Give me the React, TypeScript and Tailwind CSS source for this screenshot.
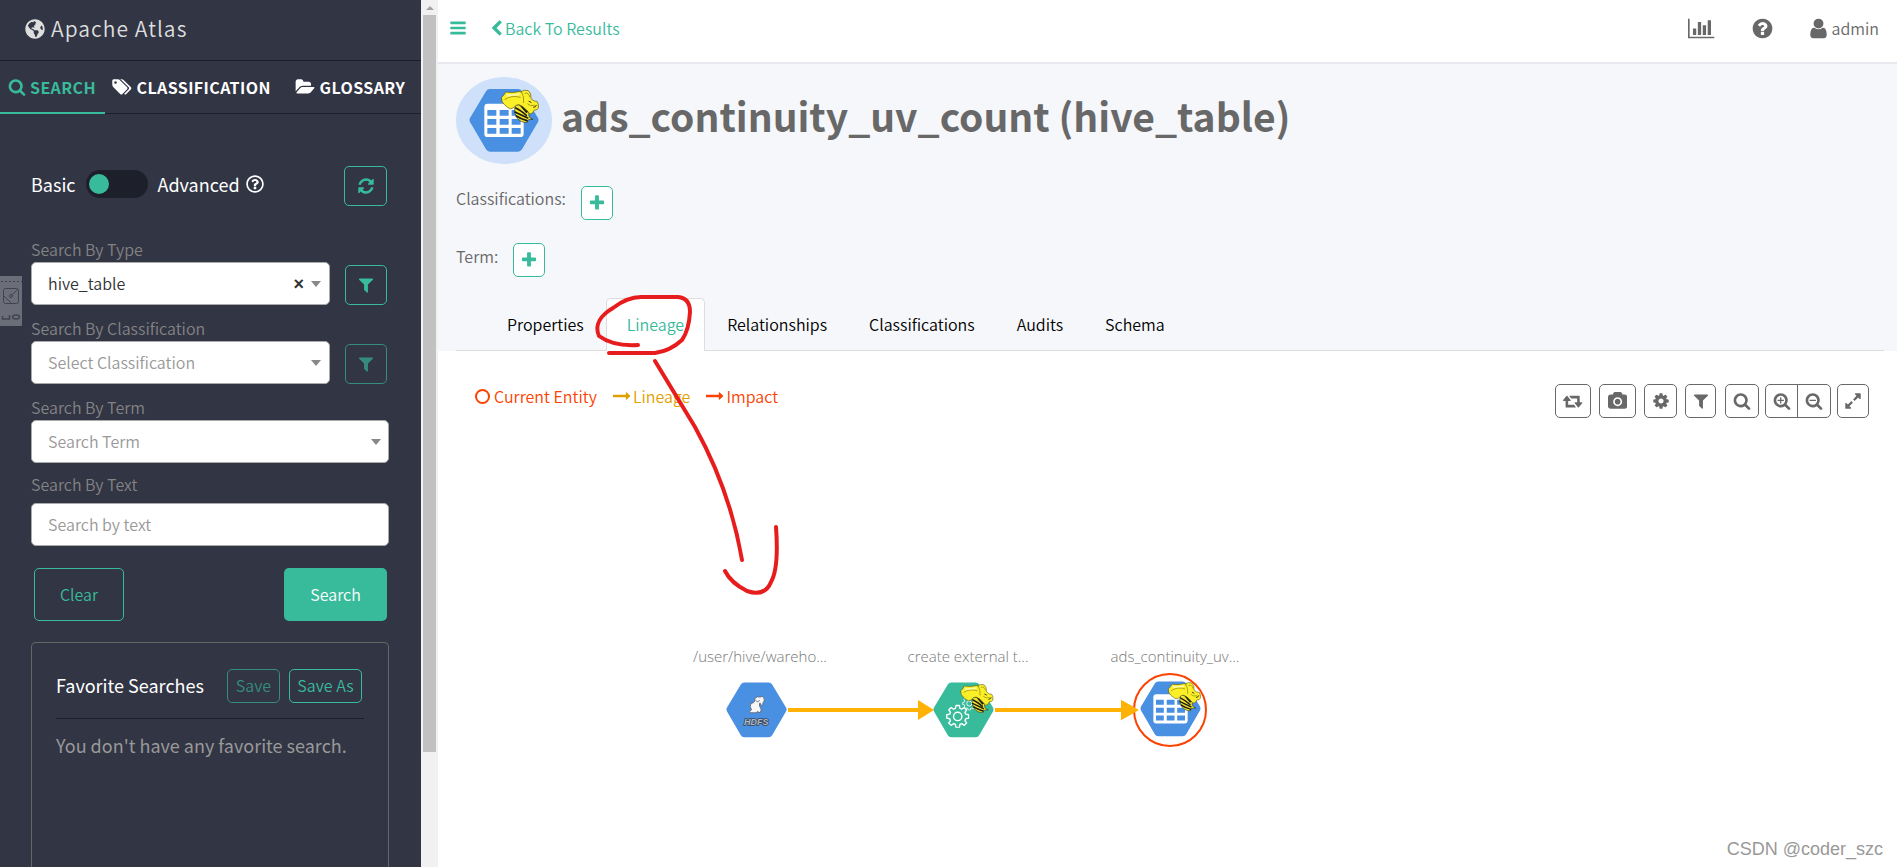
import { FaGlobeAmericas, FaRegQuestionCircle } from "react-icons/fa";

const icons = {
  search: {
    width: 1792,
    d: "M1216 832q0-185-131.5-316.5t-316.5-131.5-316.5 131.5-131.5 316.5 131.5 316.5 316.5 131.5 316.5-131.5 131.5-316.5zm512 832q0 52-38 90t-90 38q-54 0-90-38l-343-342q-179 124-399 124-143 0-273.5-55.5t-225-150-150-225-55.5-273.5 55.5-273.5 150-225 225-150 273.5-55.5 273.5 55.5 225 150 150 225 55.5 273.5q0 220-124 399l343 343q37 37 37 90z",
  },
  zoomIn: {
    width: 1792,
    d: "M1088 800v64q0 13-9.5 22.5t-22.5 9.5h-224v224q0 13-9.5 22.5t-22.5 9.5h-64q-13 0-22.5-9.5t-9.5-22.5v-224h-224q-13 0-22.5-9.5t-9.5-22.5v-64q0-13 9.5-22.5t22.5-9.5h224v-224q0-13 9.5-22.5t22.5-9.5h64q13 0 22.5 9.5t9.5 22.5v224h224q13 0 22.5 9.5t9.5 22.5zm128 32q0-185-131.5-316.5t-316.5-131.5-316.5 131.5-131.5 316.5 131.5 316.5 316.5 131.5 316.5-131.5 131.5-316.5zm512 832q0 53-37.5 90.5t-90.5 37.5q-54 0-90-38l-343-342q-179 124-399 124-143 0-273.5-55.5t-225-150-150-225-55.5-273.5 55.5-273.5 150-225 225-150 273.5-55.5 273.5 55.5 225 150 150 225 55.5 273.5q0 220-124 399l343 343q37 37 37 90z",
  },
  zoomOut: {
    width: 1792,
    d: "M1088 800v64q0 13-9.5 22.5t-22.5 9.5h-576q-13 0-22.5-9.5t-9.5-22.5v-64q0-13 9.5-22.5t22.5-9.5h576q13 0 22.5 9.5t9.5 22.5zm128 32q0-185-131.5-316.5t-316.5-131.5-316.5 131.5-131.5 316.5 131.5 316.5 316.5 131.5 316.5-131.5 131.5-316.5zm512 832q0 53-37.5 90.5t-90.5 37.5q-54 0-90-38l-343-342q-179 124-399 124-143 0-273.5-55.5t-225-150-150-225-55.5-273.5 55.5-273.5 150-225 225-150 273.5-55.5 273.5 55.5 225 150 150 225 55.5 273.5q0 220-124 399l343 343q37 37 37 90z",
  },
  refresh: {
    width: 1792,
    d: "M1639 1056q0 5-1 7-64 268-268 434.5t-478 166.5q-146 0-282.5-55t-243.5-157l-129 129q-19 19-45 19t-45-19-19-45v-448q0-26 19-45t45-19h448q26 0 45 19t19 45-19 45l-137 137q71 66 161 102t187 36q134 0 250-65t186-179q11-17 53-117 8-23 30-23h192q13 0 22.5 9.5t9.5 22.5zm25-800v448q0 26-19 45t-45 19h-448q-26 0-45-19t-19-45 19-45l138-138q-148-137-349-137-134 0-250 65t-186 179q-11 17-53 117-8 23-30 23h-199q-13 0-22.5-9.5t-9.5-22.5v-7q65-268 270-434.5t480-166.5q146 0 284 55.5t245 156.5l130-129q19-19 45-19t45 19 19 45z",
  },
  filter: {
    width: 1792,
    d: "M1595 295q17 41-14 70l-493 493v742q0 42-39 59-13 5-25 5-27 0-45-19l-256-256q-19-19-19-45v-486l-493-493q-31-29-14-70 17-39 59-39h1280q42 0 59 39z",
  },
  plus: {
    width: 1792,
    d: "M1600 736v192q0 40-28 68t-68 28h-416v416q0 40-28 68t-68 28h-192q-40 0-68-28t-28-68v-416h-416q-40 0-68-28t-28-68v-192q0-40 28-68t68-28h416v-416q0-40 28-68t68-28h192q40 0 68 28t28 68v416h416q40 0 68 28t28 68z",
  },
  bars: {
    width: 1792,
    d: "M1664 1344v128q0 26-19 45t-45 19h-1408q-26 0-45-19t-19-45v-128q0-26 19-45t45-19h1408q26 0 45 19t19 45zm0-512v128q0 26-19 45t-45 19h-1408q-26 0-45-19t-19-45v-128q0-26 19-45t45-19h1408q26 0 45 19t19 45zm0-512v128q0 26-19 45t-45 19h-1408q-26 0-45-19t-19-45v-128q0-26 19-45t45-19h1408q26 0 45 19t19 45z",
  },
  barChart: {
    width: 2048,
    d: "M640 896v512h-256v-512h256zm384-512v1024h-256v-1024h256zm1024 1152v128h-2048v-1536h128v1408h1920zm-640-896v768h-256v-768h256zm384-384v1152h-256v-1152h256z",
  },
  question: {
    width: 1792,
    d: "M1024 1376v-192q0-14-9-23t-23-9h-192q-14 0-23 9t-9 23v192q0 14 9 23t23 9h192q14 0 23-9t9-23zm256-672q0-88-55.5-163t-138.5-116-170-41q-243 0-371 213-15 24 8 42l132 100q7 6 19 6 16 0 25-12 53-68 86-92 34-24 86-24 48 0 85.5 26t37.5 59q0 38-20 61t-68 45q-63 28-115.5 86.5t-52.5 125.5v36q0 14 9 23t23 9h192q14 0 23-9t9-23q0-19 21.5-49.5t54.5-49.5q32-18 49-28.5t46-35 44.5-48 28-60.5 12.5-81zm384 192q0 209-103 385.5t-279.5 279.5-385.5 103-385.5-103-279.5-279.5-103-385.5 103-385.5 279.5-279.5 385.5-103 385.5 103 279.5 279.5 103 385.5z",
  },
  user: {
    width: 1792,
    d: "M1536 1399q0 109-62.5 187t-150.5 78h-854q-88 0-150.5-78t-62.5-187q0-85 8.5-160.5t31.5-152 58.5-131 94-89 134.5-34.5q131 128 313 128t313-128q76 0 134.5 34.5t94 89 58.5 131 31.5 152 8.5 160.5zm-256-887q0 159-112.5 271.5t-271.5 112.5-271.5-112.5-112.5-271.5 112.5-271.5 271.5-112.5 271.5 112.5 112.5 271.5z",
  },
  chevronLeft: {
    width: 1792,
    d: "M1427 301l-531 531 531 531q19 19 19 45t-19 45l-166 166q-19 19-45 19t-45-19l-742-742q-19-19-19-45t19-45l742-742q19-19 45-19t45 19l166 166q19 19 19 45t-19 45z",
  },
  folderOpen: {
    width: 2048,
    d: "M1943 952q0 31-31 66l-336 396q-43 51-120.5 86.5t-143.5 35.5h-1088q-34 0-60.5-13t-26.5-43q0-31 31-66l336-396q43-51 120.5-86.5t143.5-35.5h1088q34 0 60.5 13t26.5 43zm-343-344v160h-832q-94 0-197 47.5t-164 119.5l-337 396-5 6q0-4-.5-12.5t-.5-12.5v-960q0-92 66-158t158-66h320q92 0 158 66t66 158v32h544q92 0 158 66t66 158z",
  },
  tags: {
    width: 2048,
    d: "M576 448q0-53-37.5-90.5t-90.5-37.5-90.5 37.5-37.5 90.5 37.5 90.5 90.5 37.5 90.5-37.5 37.5-90.5zm1067 576q0 53-37 90l-491 492q-39 37-91 37-53 0-90-37l-715-716q-38-37-64.5-101t-26.5-117v-416q0-52 38-90t90-38h416q53 0 117 26.5t102 64.5l715 714q37 39 37 91zm384 0q0 53-37 90l-491 492q-39 37-91 37-36 0-59-14t-53-45l470-470q37-37 37-90 0-52-37-91l-715-714q-38-38-102-64.5t-117-26.5h224q53 0 117 26.5t102 64.5l715 714q37 39 37 91z",
  },
  retweet: {
    width: 1920,
    d: "M1280 1504q0 13-9.5 22.5t-22.5 9.5h-960q-8 0-13.5-2t-9-7-5.5-8-3-11.5-1-11.5v-600h-192q-26 0-45-19t-19-45q0-24 15-41l320-384q19-22 49-22t49 22l320 384q15 17 15 41 0 26-19 45t-45 19h-192v384h576q16 0 25 11l160 192q7 10 7 21zm640-416q0 24-15 41l-320 384q-20 23-49 23t-49-23l-320-384q-15-17-15-41 0-26 19-45t45-19h192v-384h-576q-16 0-25-12l-160-192q-7-9-7-20 0-13 9.5-22.5t22.5-9.5h960q8 0 13.5 2t9 7 5.5 8 3 11.5 1 11.5v600h192q26 0 45 19t19 45z",
  },
  camera: {
    width: 1920,
    d: "M960 672q119 0 203.5 84.5t84.5 203.5-84.5 203.5-203.5 84.5-203.5-84.5-84.5-203.5 84.5-203.5 203.5-84.5zm704-416q106 0 181 75t75 181v896q0 106-75 181t-181 75h-1408q-106 0-181-75t-75-181v-896q0-106 75-181t181-75h224l51-136q19-49 69.5-84.5t103.5-35.5h512q53 0 103.5 35.5t69.5 84.5l51 136h224zm-704 1152q185 0 316.5-131.5t131.5-316.5-131.5-316.5-316.5-131.5-316.5 131.5-131.5 316.5 131.5 316.5 316.5 131.5z",
  },
  cog: {
    width: 1792,
    d: "M1152 896q0-106-75-181t-181-75-181 75-75 181 75 181 181 75 181-75 75-181zm512-109v222q0 12-8 23t-20 13l-185 28q-19 54-39 91 35 50 107 138 10 12 10 25t-9 23q-27 37-99 108t-94 71q-12 0-26-9l-138-108q-44 23-91 38-16 136-29 186-7 28-36 28h-222q-14 0-24.5-8.5t-11.5-21.5l-28-184q-49-16-90-37l-141 107q-10 9-25 9-14 0-25-11-126-114-165-168-7-10-7-23 0-12 8-23 15-21 51-66.5t54-70.5q-27-50-41-99l-183-27q-13-2-21-12.5t-8-23.5v-222q0-12 8-23t19-13l186-28q14-46 39-92-40-57-107-138-10-12-10-24 0-10 9-23 26-36 98.5-107.5t94.5-71.5q13 0 26 10l138 107q44-23 91-38 16-136 29-186 7-28 36-28h222q14 0 24.5 8.5t11.5 21.5l28 184q49 16 90 37l142-107q9-9 24-9 13 0 25 10 129 119 165 170 7 8 7 22 0 12-8 23-15 21-51 66.5t-54 70.5q26 50 41 98l183 28q13 2 21 12.5t8 23.5z",
  },
  expand: {
    width: 1792,
    d: "M883 1056q0 13-10 23l-332 332 144 144q19 19 19 45t-19 45-45 19h-448q-26 0-45-19t-19-45v-448q0-26 19-45t45-19 45 19l144 144 332-332q10-10 23-10t23 10l114 114q10 10 10 23zm781-864v448q0 26-19 45t-45 19-45-19l-144-144-332 332q-10 10-23 10t-23-10l-114-114q-10-10-10-23t10-23l332-332-144-144q-19-19-19-45t19-45 45-19h448q26 0 45 19t19 45z",
  },
  longArrow: {
    width: 1792,
    d: "M1728 893q0 14-10 24l-384 354q-16 14-35 6-19-9-19-29v-224h-1248q-14 0-23-9t-9-23v-192q0-14 9-23t23-9h1248v-224q0-21 19-29t35 5l384 350q10 10 10 23z",
  },
};

type IconName = keyof typeof icons;

function Icon({ name, size = 18 }: { name: IconName; size?: number }) {
  const { width, d } = icons[name];
  return (
    <svg
      className="shrink-0"
      height={size}
      width={(size * width) / 1792}
      viewBox={`0 0 ${width} 1792`}
      fill="currentColor"
      aria-hidden="true"
    >
      <path d={d} />
    </svg>
  );
}

// Yellow elephant head on a striped bee body, drawn on a 114x102 grid
function HiveMark() {
  return (
    <g strokeLinejoin="round" strokeLinecap="round">
      <path
        d="M44 48C38 58 42 72 46 82C54 96 70 102 80 98C74 94 82 90 96 90C86 88 82 80 84 70L70 48Z"
        fill="#f4e62a"
        stroke="#2b2a1c"
        strokeWidth="2"
      />
      <path d="M44 56Q58 62 76 78M42 68Q58 76 80 86M46 80Q58 88 78 94" fill="none" stroke="#1f1e14" strokeWidth="5" />
      <path d="M52 44L76 72L84 66L64 42Z" fill="#1f1e14" />
      <path
        d="M2 24Q10 18 14 8Q34 12 58 6Q62 14 62 6Q70 0 82 4Q92 12 90 28Q100 38 108 36Q114 44 112 56Q108 64 100 62Q96 74 86 74Q82 66 74 60Q66 50 54 46Q48 44 36 56Q28 62 20 54Q8 46 4 38Z"
        fill="#fbf028"
        stroke="#5d5613"
        strokeWidth="2"
      />
      <path d="M62 8Q70 22 68 40M72 12Q84 8 86 22M80 44Q88 52 100 48M12 30Q32 16 58 24" fill="none" stroke="#a79c19" strokeWidth="3" />
      <path d="M84 36l6 3M98 54q6 0 8-6" fill="none" stroke="#2b2a1c" strokeWidth="3" />
      <path d="M18 14Q36 16 54 12L56 18Q34 20 16 22Z" fill="#fdf9a5" />
    </g>
  );
}

const HEXAGON =
  "M3 87Q0 93 3 99L51 181Q55 188 63 188H147Q155 188 159 181L207 99Q210 93 207 87L159 7Q155 0 147 0H63Q55 0 51 7Z";

// Hive table symbol on a 210x189 grid
function TableMark() {
  return (
    <g>
      <path d={HEXAGON} fill="#4a90e2" />
      <rect x="46" y="44" width="118" height="100" rx="10" fill="#fff" />
      <g fill="#4a90e2">
        <path d="M55 63h27v17H55zM92 63h27v17H92zM128 63h27v17h-27zM55 90h27v17H55zM92 90h27v17H92zM128 90h27v17h-27zM55 117h27v17H55zM92 117h27v17H92zM128 117h27v17h-27z" />
      </g>
      <g transform="translate(96 1)">
        <HiveMark />
      </g>
    </g>
  );
}

function GearMark({ x, y, size }: { x: number; y: number; size: number }) {
  return (
    <svg x={x} y={y} width={size} height={size} viewBox="0 0 24 24" fill="none" stroke="#fff" strokeWidth="1.4">
      <path
        d="M10.3 1.5h3.4l.6 2.9 1.8.8 2.5-1.7 2.4 2.4-1.7 2.5.8 1.8 2.9.6v3.4l-2.9.6-.8 1.8 1.7 2.5-2.4 2.4-2.5-1.7-1.8.8-.6 2.9h-3.4l-.6-2.9-1.8-.8-2.5 1.7L3 19.1l1.7-2.5-.8-1.8-2.9-.6v-3.4l2.9-.6.8-1.8L3 5.9l2.4-2.4 2.5 1.7 1.8-.8z"
        strokeLinejoin="round"
      />
      <circle cx="12" cy="12.5" r="4.2" />
    </svg>
  );
}

function LineageGraph() {
  return (
    <svg width="640" height="120" viewBox="0 0 640 120" className="block" role="img" aria-label="Lineage graph">
      <g fill="#777" fontFamily="'Open Sans', 'Noto Sans', sans-serif" fontWeight="300" fontSize="15" textAnchor="middle">
        <text x="82" y="23">/user/hive/wareho...</text>
        <text x="290" y="23">create external t...</text>
        <text x="497" y="23">ads_continuity_uv...</text>
      </g>
      <path d="M110 69h130v-8l16 10-16 10v-8H110zM317 69h126v-8l18 10-18 10v-8H317z" fill="#ffb203" />
      <svg x="48" y="43" width="61" height="56" viewBox="0 0 210 189">
        <path d={HEXAGON} fill="#4a90e2" />
        <g stroke="#5b6472" strokeWidth="3" fill="#f7f7f7" strokeLinejoin="round">
          <path d="M100 54Q108 46 116 50Q126 44 131 54Q134 64 127 70Q130 80 121 78Q118 74 117 70Q112 76 118 86Q124 92 118 104L108 100Q104 106 98 104H82Q78 98 88 94Q80 84 86 72Q96 70 98 66Z" />
          <path d="M102 62Q108 70 116 62" fill="none" />
        </g>
        <text
          x="104"
          y="146"
          textAnchor="middle"
          fontFamily="'Liberation Sans', sans-serif"
          fontWeight="700"
          fontStyle="italic"
          fontSize="31"
          fill="#a9b8cc"
          stroke="#3f4652"
          strokeWidth="5"
          paintOrder="stroke"
        >
          HDFS
        </text>
      </svg>
      <svg x="255" y="43" width="61" height="56" viewBox="0 0 210 189">
        <path d={HEXAGON} fill="#38bb9b" />
        <GearMark x={44} y={74} size={82} />
        <GearMark x={100} y={46} size={50} />
        <g transform="translate(94 4)">
          <HiveMark />
        </g>
      </svg>
      <circle cx="492" cy="71" r="36" fill="#fff" stroke="#fb4200" strokeWidth="2" />
      <svg x="462" y="42" width="61" height="56" viewBox="0 0 210 189">
        <TableMark />
      </svg>
      <path d="M443 61l18 10-18 10z" fill="#ffb203" />
    </svg>
  );
}

// Freehand marks drawn over the page
function Annotation() {
  return (
    <svg
      className="pointer-events-none absolute top-[290px] left-[154px]"
      width="200"
      height="312"
      viewBox="592 290 200 312"
      fill="none"
      stroke="#e71d1d"
      strokeWidth="4"
      strokeLinecap="round"
      strokeLinejoin="round"
    >
      <path d="M638 345C620 346 607 342 599 336C594 325 601 315 613 308C622 301 631 297 641 297L678 297Q690 298 690 312Q689 330 682 340Q670 351 655 353L609 353" />
      <path d="M655 361L695 427Q730 490 742 560" />
      <path d="M725 571Q731 583 747 591Q765 597 771 582Q779 568 776 527" />
    </svg>
  );
}

function Caret() {
  return <span className="pointer-events-none h-0 w-0 border-x-[5px] border-t-[6px] border-x-transparent border-t-[#888]" />;
}

const fieldClass =
  "h-[43px] w-full appearance-none rounded-[5px] border border-[#aaa] bg-white pb-[2px] pl-4 text-base leading-6 outline-none";

const outlineButton =
  "flex items-center justify-center rounded-[5px] border border-[#38bb9b] text-[#38bb9b]";

function Sidebar() {
  return (
    <aside className="flex h-full w-[421px] shrink-0 flex-col overflow-hidden bg-[#323544]">
      <div className="flex h-[61px] shrink-0 items-center gap-[6px] border-b border-[#1c1e29] pr-4 pb-[2px] pl-[25px] text-[21px] text-[#dedede]">
        <FaGlobeAmericas size={20} />
        <span className="tracking-wider">Apache Atlas</span>
      </div>

      <nav className="flex h-[53px] shrink-0 border-b border-[#1c1e29] pb-px text-base font-bold tracking-wide text-white">
        <a href="#search" className="-mb-[2px] flex w-[105px] items-center gap-1 border-b-2 border-[#38bb9b] pl-2 text-[#38bb9b]">
          <Icon name="search" />
          SEARCH
        </a>
        <a href="#classification" className="flex w-[182px] items-center gap-[5px] pl-[6px]">
          <Icon name="tags" />
          CLASSIFICATION
        </a>
        <a href="#glossary" className="flex items-center gap-1 pl-2">
          <Icon name="folderOpen" />
          GLOSSARY
        </a>
      </nav>

      <form className="flex min-h-0 flex-1 flex-col pt-[52px] pr-8 pl-[31px]" onSubmit={(e) => e.preventDefault()}>
        <div className="flex h-10 items-center pr-[2px] text-lg leading-6 font-normal text-white">
          <label className="flex items-center pb-1">
            Basic
            <input type="checkbox" role="switch" aria-label="Advanced search" className="peer sr-only" />
            <span className="mx-[10px] flex h-7 w-[62px] items-center rounded-full bg-[#1d1f2a] px-[3px] peer-checked:justify-end">
              <span className="h-5 w-5 rounded-full bg-[#38bb9b]" />
            </span>
            Advanced
          </label>
          <span className="ml-[6px] pb-1">
            <FaRegQuestionCircle size={18} />
          </span>
          <button type="button" aria-label="Refresh" className={`${outlineButton} ml-auto h-10 w-[43px]`}>
            <Icon name="refresh" />
          </button>
        </div>

        <label htmlFor="type" className="mt-[30px] h-[26px] leading-[26px] text-[#838383]">
          Search By Type
        </label>
        <div className="flex items-end pr-[2px]">
          <div className="relative w-[299px]">
            <select id="type" className={`${fieldClass} text-[#333]`}>
              <option>hive_table</option>
            </select>
            <div className="absolute inset-y-0 right-[9px] flex items-center gap-[7px]">
              <button
                type="button"
                aria-label="Clear type"
                className="font-['Liberation_Sans',sans-serif] text-lg leading-5 font-bold text-[#333]"
              >
                ×
              </button>
              <Caret />
            </div>
          </div>
          <button type="button" aria-label="Filter type" className={`${outlineButton} ml-auto h-10 w-[42px]`}>
            <Icon name="filter" />
          </button>
        </div>

        <label htmlFor="classification" className="mt-[10px] h-[26px] leading-[26px] text-[#838383]">
          Search By Classification
        </label>
        <div className="flex items-end pr-[2px]">
          <div className="relative w-[299px]">
            <select id="classification" className={`${fieldClass} text-[#999]`}>
              <option>Select Classification</option>
            </select>
            <div className="pointer-events-none absolute inset-y-0 right-[9px] flex items-center">
              <Caret />
            </div>
          </div>
          <button type="button" disabled aria-label="Filter classification" className={`${outlineButton} ml-auto h-10 w-[42px] opacity-65`}>
            <Icon name="filter" />
          </button>
        </div>

        <label htmlFor="term" className="mt-[10px] h-[26px] leading-[26px] text-[#838383]">
          Search By Term
        </label>
        <div className="relative">
          <select id="term" className={`${fieldClass} text-[#999]`}>
            <option>Search Term</option>
          </select>
          <div className="pointer-events-none absolute inset-y-0 right-[8px] flex items-center">
            <Caret />
          </div>
        </div>

        <label htmlFor="text" className="mt-2 mb-[6px] h-[26px] leading-[26px] text-[#838383]">
          Search By Text
        </label>
        <input id="text" type="text" placeholder="Search by text" className={`${fieldClass} shrink-0 placeholder:text-[#999]`} />

        <div className="mt-[22px] flex shrink-0 justify-between pr-[2px] pl-[3px]">
          <button type="button" className={`${outlineButton} h-[53px] w-[90px] pb-[2px]`}>
            Clear
          </button>
          <button type="submit" className="h-[53px] w-[103px] rounded-[5px] bg-[#38bb9b] pb-[2px] text-white">
            Search
          </button>
        </div>

        <section className="mt-[21px] min-h-0 flex-1 rounded-t-[5px] border border-b-0 border-[#666] px-6 pt-[26px]">
          <div className="flex h-[50px] items-start border-b border-[#1c1e29]">
            <h2 className="mr-auto text-lg leading-8 font-normal text-white">Favorite Searches</h2>
            <button type="button" disabled className={`${outlineButton} mr-[9px] h-[34px] w-[53px] pb-[2px] opacity-65`}>
              Save
            </button>
            <button type="button" className={`${outlineButton} mr-[2px] h-[34px] w-[73px] pb-[2px]`}>
              Save As
            </button>
          </div>
          <p className="mt-3 text-lg leading-7 font-normal text-[#999]">You don't have any favorite search.</p>
        </section>
      </form>
    </aside>
  );
}

function Scrollbar() {
  return (
    <div className="flex h-full w-[17px] shrink-0 flex-col items-center bg-[#f1f1f1]" aria-hidden="true">
      <div className="flex h-[15px] shrink-0 items-center">
        <span className="border-x-4 border-b-4 border-x-transparent border-b-[#a3a3a3]" />
      </div>
      <div className="h-[85%] w-[13px] bg-[#c1c1c1]" />
    </div>
  );
}

const tabs = ["Properties", "Lineage", "Relationships", "Classifications", "Audits", "Schema"];

const toolButton = "flex h-[34px] items-center justify-center border border-[#686868]";

function Toolbar() {
  return (
    <div className="flex text-[#686868]">
      <button aria-label="Reset" className={`${toolButton} mr-2 w-9 rounded-[5px]`}>
        <Icon name="retweet" />
      </button>
      <button aria-label="Export to PNG" className={`${toolButton} mr-2 w-[37px] rounded-[5px]`}>
        <Icon name="camera" />
      </button>
      <button aria-label="Settings" className={`${toolButton} mr-2 w-[33px] rounded-[5px]`}>
        <Icon name="cog" />
      </button>
      <button aria-label="Filter" className={`${toolButton} mr-[9px] w-[31px] rounded-[5px]`}>
        <Icon name="filter" />
      </button>
      <button aria-label="Search lineage" className={`${toolButton} mr-[6px] w-[34px] rounded-[5px]`}>
        <Icon name="search" />
      </button>
      <button aria-label="Zoom in" className={`${toolButton} w-[33px] rounded-l-[5px]`}>
        <Icon name="zoomIn" />
      </button>
      <button aria-label="Zoom out" className={`${toolButton} -ml-px mr-[6px] w-[34px] rounded-r-[5px]`}>
        <Icon name="zoomOut" />
      </button>
      <button aria-label="Full screen" className={`${toolButton} w-8 rounded-[5px]`}>
        <Icon name="expand" />
      </button>
    </div>
  );
}

export default function App() {
  return (
    <div className="relative flex h-screen overflow-hidden bg-white font-['Noto_Sans_CJK_SC','Noto_Sans',sans-serif] text-base font-[350]">
      <Sidebar />
      <Scrollbar />

      <main className="relative flex min-w-0 flex-1 flex-col text-[#686868]">
        <header className="flex h-16 shrink-0 items-center border-b-2 border-[#e8e9ee] pr-[18px] pb-[6px] pl-[11px]">
          <button aria-label="Toggle sidebar" className="text-[#38bb9b]">
            <Icon name="bars" />
          </button>
          <a href="#results" className="ml-[21px] flex items-center text-[#38bb9b]">
            <Icon name="chevronLeft" size={17} />
            Back To Results
          </a>
          <div className="ml-auto flex items-center">
            <button aria-label="Statistics">
              <Icon name="barChart" size={23} />
            </button>
            <button aria-label="Help" className="ml-9">
              <Icon name="question" size={23} />
            </button>
            <button className="ml-[33px] flex items-center gap-[2px]">
              <Icon name="user" size={23} />
              admin
            </button>
          </div>
        </header>

        <section className="bg-[#f5f7fb] pt-[13px] pl-[18px]">
          <div className="flex h-[87px] gap-[9px]">
            <div className="flex h-[87px] w-24 items-center justify-center rounded-[50%] bg-[#cfe0fa]">
              <svg width="70" height="63" viewBox="0 0 210 189" aria-hidden="true">
                <TableMark />
              </svg>
            </div>
            <h1 className="text-[39px] leading-[76px] font-bold">ads_continuity_uv_count (hive_table)</h1>
          </div>

          <div className="mt-[22px] flex h-[34px]">
            <span className="leading-6">Classifications:</span>
            <button aria-label="Add classification" className={`${outlineButton} ml-[15px] h-[34px] w-8 bg-white`}>
              <Icon name="plus" />
            </button>
          </div>
          <div className="mt-[23px] flex h-[34px]">
            <span className="leading-[26px]">Term:</span>
            <button aria-label="Add term" className={`${outlineButton} ml-[15px] h-[34px] w-8 bg-white`}>
              <Icon name="plus" />
            </button>
          </div>

          <div role="tablist" className="mt-[21px] mr-[13px] flex h-[53px] gap-[2px] border-b border-[#ddd] pl-[31px] text-black">
            {tabs.map((tab) => (
              <button
                key={tab}
                role="tab"
                aria-selected={tab === "Lineage"}
                className={
                  tab === "Lineage"
                    ? "-mb-px rounded-t-[5px] border border-b-0 border-[#ddd] bg-white px-5 pb-[2px] text-[#38bb9b]"
                    : "px-5"
                }
              >
                {tab}
              </button>
            ))}
          </div>
        </section>

        <section className="relative min-h-0 flex-1">
          <div className="flex justify-between pt-[33px] pr-7 pl-[37px]">
            <div className="flex h-6 items-center text-[#fb4200]">
              <span className="mr-1 h-[15px] w-[15px] rounded-full border-2 border-[#fb4200]" />
              Current Entity
              <span className="ml-4 flex items-center gap-[2px] text-[#dfa000]">
                <Icon name="longArrow" />
                Lineage
              </span>
              <span className="ml-4 flex items-center gap-[2px]">
                <Icon name="longArrow" />
                Impact
              </span>
            </div>
            <Toolbar />
          </div>
          <div className="absolute top-[288px] left-[240px]">
            <LineageGraph />
          </div>
        </section>

        <Annotation />
        <p className="absolute right-[14px] bottom-[6px] font-['Liberation_Sans',sans-serif] text-lg leading-6 font-normal text-[#999]">
          CSDN @coder_szc
        </p>
      </main>

      {/* Collapsed tool handle at the window edge */}
      <div className="absolute top-[276px] left-0 h-[50px] w-[22px] bg-[#6b6d79]">
        <svg width="22" height="50" viewBox="0 0 22 50" fill="none" stroke="#41434f" aria-hidden="true">
          <path d="M1 5.500h21" strokeDasharray="2 2" />
          <rect x="3.500" y="12.500" width="15" height="15" rx="2" />
          <path d="M4 20l7 7M18 13l-6 6" />
          <circle cx="11" cy="20" r="1.500" />
          <path d="M2.500 40v3h7v-4M12.500 41q0-2 3.500-2t3.500 2q0 2-3.500 2t-3.500-2z" strokeWidth="1.500" />
        </svg>
      </div>
    </div>
  );
}
